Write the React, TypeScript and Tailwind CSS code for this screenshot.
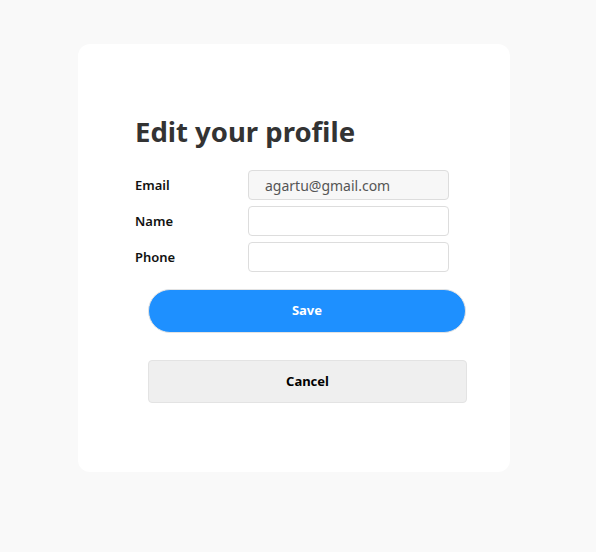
export default function App() {
  const fields = [
    { label: "Email", value: "agartu@gmail.com", readOnly: true },
    { label: "Name", value: "", readOnly: false },
    { label: "Phone", value: "", readOnly: false },
  ];

  return (
    <div
      className="min-h-[552px] bg-[#f9f9f9] pt-[44px] pl-[78px]"
      style={{ fontFamily: '"Segoe UI", "Noto Sans", sans-serif' }}
    >
      <div className="w-[432px] h-[428px] rounded-xl bg-white pt-[72px] pl-[57px]">
        <h1 className="text-[27.5px] font-bold leading-[32px] text-[#333]">Edit your profile</h1>

        <div className="mt-[22px] flex flex-col gap-[6px]">
          {fields.map((f) => (
            <div key={f.label} className="flex items-center">
              <label className="w-[113px] pt-[2px] text-[13px] font-semibold text-[#111]">{f.label}</label>
              <input
                readOnly={f.readOnly}
                defaultValue={f.value}
                className={`h-[30px] w-[201px] rounded border border-[#ddd] px-4 text-[14px] text-[#555] outline-none ${
                  f.readOnly ? "bg-[#f7f7f7]" : "bg-white"
                }`}
              />
            </div>
          ))}
        </div>

        <button className="mt-[17px] ml-[13px] block h-[44px] w-[318px] rounded-full border border-[#e3e3e3] bg-[#1e90ff] text-[13px] font-bold text-white">
          Save
        </button>
        <button className="mt-[27px] ml-[13px] block h-[43px] w-[319px] rounded border border-[#e3e3e3] bg-[#efefef] text-[13px] font-bold text-black">
          Cancel
        </button>
      </div>
    </div>
  );
}
